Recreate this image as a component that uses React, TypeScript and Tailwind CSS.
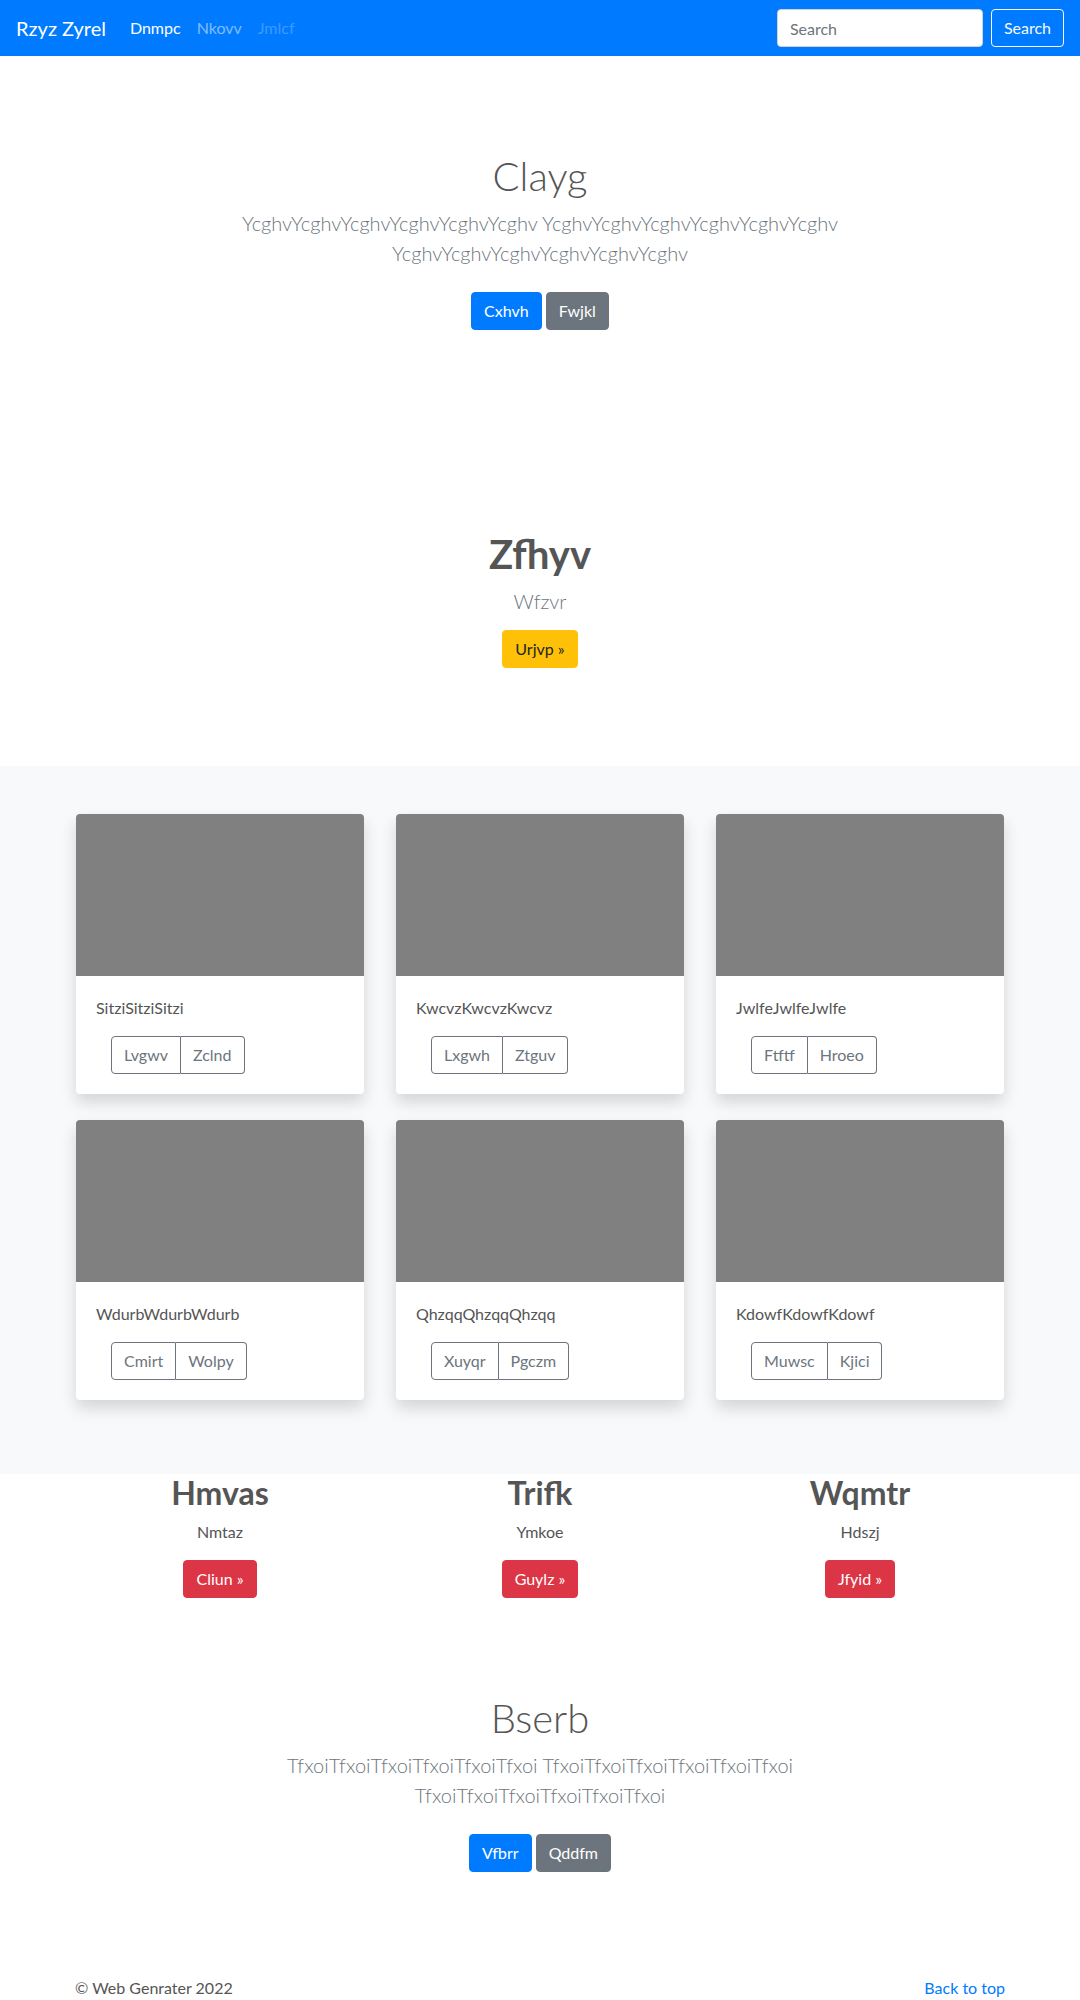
import React from "react"

const cards = [
  { text: "SitziSitziSitzi", a: "Lvgwv", b: "Zclnd" },
  { text: "KwcvzKwcvzKwcvz", a: "Lxgwh", b: "Ztguv" },
  { text: "JwlfeJwlfeJwlfe", a: "Ftftf", b: "Hroeo" },
  { text: "WdurbWdurbWdurb", a: "Cmirt", b: "Wolpy" },
  { text: "QhzqqQhzqqQhzqq", a: "Xuyqr", b: "Pgczm" },
  { text: "KdowfKdowfKdowf", a: "Muwsc", b: "Kjici" },
]

const features = [
  { title: "Hmvas", text: "Nmtaz", btn: "Cliun" },
  { title: "Trifk", text: "Ymkoe", btn: "Guylz" },
  { title: "Wqmtr", text: "Hdszj", btn: "Jfyid" },
]

function Hero({ title, lead, primary, secondary }: { title: string; lead: string; primary: string; secondary: string }) {
  return (
    <section className="py-24 text-center">
      <div className="max-w-[640px] mx-auto px-[15px]">
        <h1 className="text-[40px] font-light leading-[1.2] mb-2 text-[#555]">{title}</h1>
        <p className="text-[20px] font-light leading-[1.5] text-[#6c757d] mb-4">{lead}</p>
        <div className="flex justify-center gap-1 py-2">
          <a className="px-3 py-1.5 leading-6 rounded bg-[#007bff] border border-[#007bff] text-white">{primary}</a>
          <a className="px-3 py-1.5 leading-6 rounded bg-[#6c757d] border border-[#6c757d] text-white">{secondary}</a>
        </div>
      </div>
    </section>
  )
}

function Card({ text, a, b }: { text: string; a: string; b: string }) {
  return (
    <div className="bg-white rounded overflow-hidden shadow-[0_8px_16px_rgba(0,0,0,0.15)] mb-[26px]">
      <div className="h-[162px] bg-[#808080]" />
      <div className="p-5">
        <p className="text-[#555] leading-6 mb-4">{text}</p>
        <div className="inline-flex ml-[15px]">
          <button className="px-3 py-1.5 leading-6 border border-[#6c757d] text-[#6c757d] rounded-l">{a}</button>
          <button className="px-3 py-1.5 leading-6 border border-l-0 border-[#6c757d] text-[#6c757d] rounded-r">{b}</button>
        </div>
      </div>
    </div>
  )
}

export default function App() {
  return (
    <div className="font-[Lato,sans-serif] text-base text-[#555] bg-white">
      <nav className="h-14 bg-[#007bff] px-4 flex items-center">
        <a className="text-[20px] text-white mr-4 leading-[30px]">Rzyz Zyrel</a>
        <a className="px-2 text-white">Dnmpc</a>
        <a className="px-2 text-white/50">Nkovv</a>
        <a className="px-2 text-white/25">Jmlcf</a>
        <form className="ml-auto flex items-center">
          <input
            placeholder="Search"
            className="w-[206px] h-[38px] bg-white rounded border border-[#ced4da] px-3 text-[#495057] placeholder:text-[#6c757d] outline-none"
          />
          <button type="button" className="ml-2 h-[38px] px-3 rounded border border-[#f8f9fa] text-[#f8f9fa]">Search</button>
        </form>
      </nav>

      <Hero
        title="Clayg"
        lead="YcghvYcghvYcghvYcghvYcghvYcghv YcghvYcghvYcghvYcghvYcghvYcghv YcghvYcghvYcghvYcghvYcghvYcghv"
        primary="Cxhvh"
        secondary="Fwjkl"
      />

      <section className="pt-24 pb-[98px] text-center">
        <h1 className="text-[40px] font-bold leading-[1.2] mb-2 text-[#555]">Zfhyv</h1>
        <p className="text-[20px] font-light leading-[1.5] text-[#6c757d]">Wfzvr</p>
        <a className="inline-block mt-[14px] px-3 py-1.5 leading-6 rounded bg-[#ffc107] border border-[#ffc107] text-[#212529]">Urjvp »</a>
      </section>

      <section className="bg-[#f8f9fa] py-12">
        <div className="w-[960px] mx-auto grid grid-cols-3">
          {cards.map((c) => (
            <div key={c.text} className="px-4">
              <Card {...c} />
            </div>
          ))}
        </div>
      </section>

      <section className="w-[960px] mx-auto grid grid-cols-3 text-center">
        {features.map((f) => (
          <div key={f.title}>
            <h2 className="text-[32px] font-bold leading-[1.2] mb-2 text-[#555]">{f.title}</h2>
            <p className="leading-6 mb-4">{f.text}</p>
            <a className="inline-block px-3 py-1.5 leading-6 rounded bg-[#dc3545] border border-[#dc3545] text-white">{f.btn} »</a>
          </div>
        ))}
      </section>

      <Hero
        title="Bserb"
        lead="TfxoiTfxoiTfxoiTfxoiTfxoiTfxoi TfxoiTfxoiTfxoiTfxoiTfxoiTfxoi TfxoiTfxoiTfxoiTfxoiTfxoiTfxoi"
        primary="Vfbrr"
        secondary="Qddfm"
      />

      <footer className="w-[960px] mx-auto px-[15px] pb-12 flex justify-between leading-6">
        <p>© Web Genrater 2022</p>
        <a className="text-[#007bff]">Back to top</a>
      </footer>
    </div>
  )
}
